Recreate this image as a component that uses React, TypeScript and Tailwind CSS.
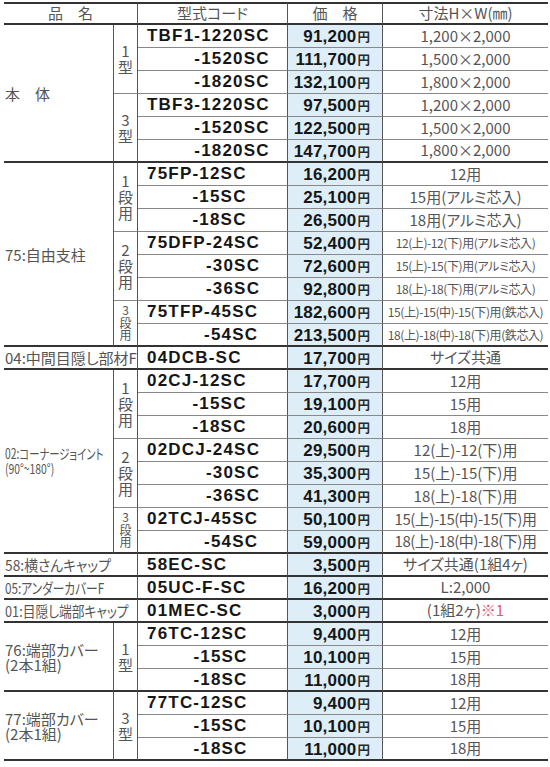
import React from "react";

type Row = { code: string; price: string; dim: React.ReactNode; fine?: boolean; tight?: boolean };
type Sub = { tag?: string[]; small?: boolean; rows: Row[] };
type Section = { label: string[]; squeeze?: string; wide?: boolean; size?: string; subs: Sub[] };

const r = (code: string, price: string, dim: React.ReactNode, fine?: boolean, tight?: boolean): Row => ({
  code,
  price,
  dim,
  fine,
  tight,
});

const SECTIONS: Section[] = [
  {
    label: ["本　体"],
    subs: [
      {
        tag: ["1", "型"],
        rows: [
          r("TBF1-1220SC", "91,200", "1,200×2,000"),
          r("-1520SC", "111,700", "1,500×2,000"),
          r("-1820SC", "132,100", "1,800×2,000"),
        ],
      },
      {
        tag: ["3", "型"],
        rows: [
          r("TBF3-1220SC", "97,500", "1,200×2,000"),
          r("-1520SC", "122,500", "1,500×2,000"),
          r("-1820SC", "147,700", "1,800×2,000"),
        ],
      },
    ],
  },
  {
    label: ["75:自由支柱"],
    subs: [
      {
        tag: ["1", "段", "用"],
        rows: [
          r("75FP-12SC", "16,200", "12用"),
          r("-15SC", "25,100", "15用(アルミ芯入)"),
          r("-18SC", "26,500", "18用(アルミ芯入)"),
        ],
      },
      {
        tag: ["2", "段", "用"],
        rows: [
          r("75DFP-24SC", "52,400", "12(上)-12(下)用(アルミ芯入)", true),
          r("-30SC", "72,600", "15(上)-15(下)用(アルミ芯入)", true),
          r("-36SC", "92,800", "18(上)-18(下)用(アルミ芯入)", true),
        ],
      },
      {
        tag: ["3", "段", "用"],
        small: true,
        rows: [
          r("75TFP-45SC", "182,600", "15(上)-15(中)-15(下)用(鉄芯入)", true),
          r("-54SC", "213,500", "18(上)-18(中)-18(下)用(鉄芯入)", true),
        ],
      },
    ],
  },
  {
    label: ["04:中間目隠し部材F"],
    wide: true,
    subs: [{ rows: [r("04DCB-SC", "17,700", "サイズ共通")] }],
  },
  {
    label: ["02:コーナージョイント", "(90°~180°)"],
    squeeze: "origin-left scale-x-[0.74]",
    size: "text-[14px] leading-[15px]",
    subs: [
      {
        tag: ["1", "段", "用"],
        rows: [
          r("02CJ-12SC", "17,700", "12用"),
          r("-15SC", "19,100", "15用"),
          r("-18SC", "20,600", "18用"),
        ],
      },
      {
        tag: ["2", "段", "用"],
        rows: [
          r("02DCJ-24SC", "29,500", "12(上)-12(下)用"),
          r("-30SC", "35,300", "15(上)-15(下)用"),
          r("-36SC", "41,300", "18(上)-18(下)用"),
        ],
      },
      {
        tag: ["3", "段", "用"],
        small: true,
        rows: [
          r("02TCJ-45SC", "50,100", "15(上)-15(中)-15(下)用", false, true),
          r("-54SC", "59,000", "18(上)-18(中)-18(下)用", false, true),
        ],
      },
    ],
  },
  {
    label: ["58:横さんキャップ"],
    squeeze: "origin-left scale-x-[0.92]",
    wide: true,
    subs: [{ rows: [r("58EC-SC", "3,500", "サイズ共通(1組4ヶ)")] }],
  },
  {
    label: ["05:アンダーカバーF"],
    squeeze: "origin-left scale-x-[0.78]",
    wide: true,
    subs: [{ rows: [r("05UC-F-SC", "16,200", "L:2,000")] }],
  },
  {
    label: ["01:目隠し端部キャップ"],
    squeeze: "origin-left scale-x-[0.85]",
    wide: true,
    subs: [
      {
        rows: [
          r(
            "01MEC-SC",
            "3,000",
            <>
              (1組2ヶ)<span className="text-[#e25a6e]">※1</span>
            </>
          ),
        ],
      },
    ],
  },
  {
    label: ["76:端部カバー", "(2本1組)"],
    subs: [
      {
        tag: ["1", "型"],
        rows: [r("76TC-12SC", "9,400", "12用"), r("-15SC", "10,100", "15用"), r("-18SC", "11,000", "18用")],
      },
    ],
  },
  {
    label: ["77:端部カバー", "(2本1組)"],
    subs: [
      {
        tag: ["3", "型"],
        rows: [r("77TC-12SC", "9,400", "12用"), r("-15SC", "10,100", "15用"), r("-18SC", "11,000", "18用")],
      },
    ],
  },
];

const SPAN: Record<number, string> = {
  1: "row-span-1",
  2: "row-span-2",
  3: "row-span-3",
  6: "row-span-6",
  8: "row-span-8",
};

const CJK = "font-['Noto_Sans_CJK_JP',sans-serif] [font-feature-settings:'palt']";
const LATIN = "font-['Liberation_Sans',Arial,sans-serif]";

function Code({ code, anchor }: { code: string; anchor: string }) {
  if (code === anchor) return <span>{code}</span>;
  return (
    <span className="inline-grid">
      <span className="invisible col-start-1 row-start-1">{anchor}</span>
      <span className="col-start-1 row-start-1 text-right">{code}</span>
    </span>
  );
}

function HeadCell({ children, className = "" }: { children: React.ReactNode; className?: string }) {
  return (
    <div
      className={`flex items-center justify-center border-t-2 border-b-2 border-t-[#333] border-b-[#333] text-[15px] text-[#555] ${CJK} ${className}`}
    >
      {children}
    </div>
  );
}

export default function App() {
  const cells: React.ReactNode[] = [];

  SECTIONS.forEach((sec, si) => {
    const total = sec.subs.reduce((n, s) => n + s.rows.length, 0);
    cells.push(
      <div
        key={`l${si}`}
        className={`${sec.wide ? "col-span-2" : ""} col-start-1 ${SPAN[total]} flex flex-col items-start justify-center whitespace-nowrap border-r border-b-2 border-r-[#555] border-b-[#333] pl-[1px] text-[#555] ${CJK} ${
          sec.size ?? "text-[15px] leading-[15px]"
        }`}
      >
        {sec.label.map((t) => (
          <span key={t} className={`block ${sec.squeeze ?? ""}`}>
            {t}
          </span>
        ))}
      </div>
    );

    sec.subs.forEach((sub, ui) => {
      const lastSub = ui === sec.subs.length - 1;
      if (sub.tag) {
        cells.push(
          <div
            key={`t${si}-${ui}`}
            className={`col-start-2 ${SPAN[sub.rows.length]} flex flex-col items-center justify-center border-r border-r-[#555] text-[#555] ${CJK} ${
              lastSub ? "border-b-2 border-b-[#333]" : "border-b border-b-[#888]"
            } ${sub.small ? "text-[12px] leading-[12.5px]" : "text-[15px] leading-[16px]"}`}
          >
            {sub.tag.map((t) => (
              <span key={t}>{t}</span>
            ))}
          </div>
        );
      }
      const anchor = sub.rows[0].code;
      sub.rows.forEach((row, ri) => {
        const last = lastSub && ri === sub.rows.length - 1;
        const bb = last ? "border-b-2 border-b-[#333]" : "border-b border-b-[#888]";
        const dimSize = row.fine
          ? "text-[12px] tracking-[-0.4px]"
          : row.tight
            ? "text-[15px] tracking-[-0.5px]"
            : "text-[15px]";
        cells.push(
          <div
            key={`c${si}-${ui}-${ri}`}
            className={`col-start-3 flex items-center border-r border-r-[#555] pl-[9px] text-[17px] font-bold tracking-[1.2px] text-[#161616] ${LATIN} ${bb}`}
          >
            <Code code={row.code} anchor={anchor} />
          </div>,
          <div
            key={`p${si}-${ui}-${ri}`}
            className={`col-start-4 flex items-baseline justify-end border-r border-r-[#555] bg-[#ddeef8] pr-[12px] pt-[2px] ${bb}`}
          >
            <span className={`text-[17px] font-bold leading-[20px] tracking-[0.2px] text-[#161616] ${LATIN}`}>
              {row.price}
            </span>
            <span className={`ml-[1px] text-[12.5px] font-bold text-[#2a2a2a] ${CJK}`}>円</span>
          </div>,
          <div
            key={`d${si}-${ui}-${ri}`}
            className={`col-start-5 flex items-center justify-center whitespace-nowrap text-[#555] ${CJK} ${bb} ${dimSize}`}
          >
            {row.dim}
          </div>
        );
      });
    });
  });

  return (
    <div className="h-[767px] w-[550px] overflow-hidden bg-white pl-[4px] pt-[2px]">
      <div className="grid w-[544px] grid-cols-[110px_24px_150px_95px_165px] auto-rows-[23px]">
        <HeadCell className="col-span-2 border-r border-r-[#555]">品　名</HeadCell>
        <HeadCell className="border-r border-r-[#555]">型式コード</HeadCell>
        <HeadCell className="border-r border-r-[#555]">価　格</HeadCell>
        <HeadCell>寸法H×W(㎜)</HeadCell>
        {cells}
      </div>
    </div>
  );
}
